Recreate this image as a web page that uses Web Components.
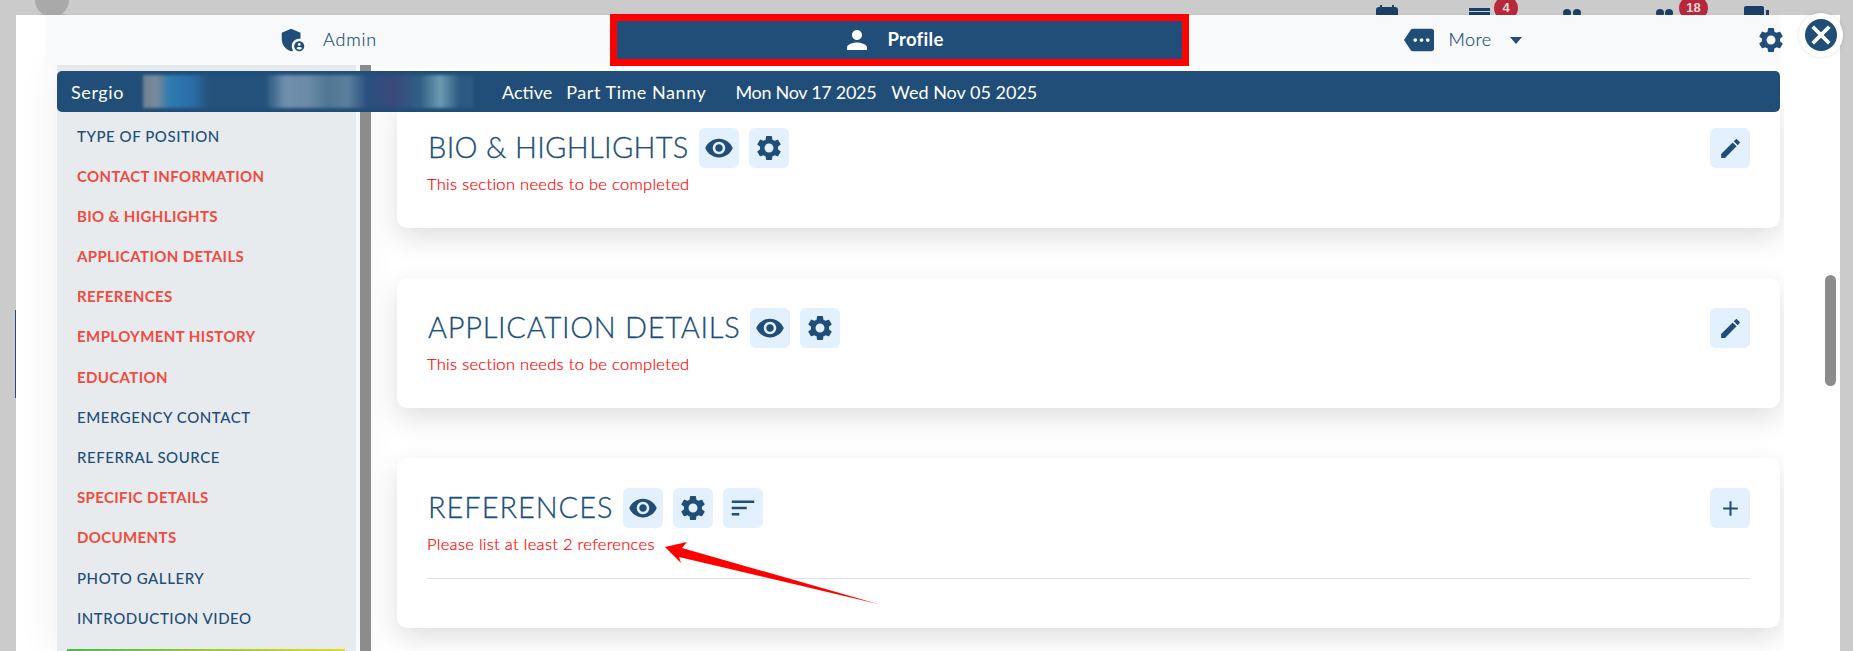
<!DOCTYPE html>
<html>
<head>
<meta charset="utf-8">
<style>
  html, body { margin: 0; height: 100%; overflow: hidden; }
  body { background: #cbcbcb; font-family: "Lato", "Liberation Sans", sans-serif; color: #204e78; }
</style>
</head>
<body>
<back-strip></back-strip>
<modal-window>
  <tab-bar slot="header">
    <tab-item icon="admin" pr="2" ls=".8">Admin</tab-item>
    <tab-item icon="person" pr="13" active>Profile</tab-item>
    <tab-item icon="more" pr="15" caret>More</tab-item>
    <nav-icon name="gear" size="30" style="justify-self:start;margin-left:-3px"></nav-icon>
  </tab-bar>
  <info-bar slot="info"></info-bar>
  <side-nav slot="side">
    <nav-item ls=".55">TYPE OF POSITION</nav-item>
    <nav-item bad ls=".37">CONTACT INFORMATION</nav-item>
    <nav-item bad ls=".37">BIO &amp; HIGHLIGHTS</nav-item>
    <nav-item bad ls=".37">APPLICATION DETAILS</nav-item>
    <nav-item bad ls=".37">REFERENCES</nav-item>
    <nav-item bad ls=".42">EMPLOYMENT HISTORY</nav-item>
    <nav-item bad ls=".37">EDUCATION</nav-item>
    <nav-item ls=".55">EMERGENCY CONTACT</nav-item>
    <nav-item ls=".55">REFERRAL SOURCE</nav-item>
    <nav-item bad ls=".37">SPECIFIC DETAILS</nav-item>
    <nav-item bad ls=".37">DOCUMENTS</nav-item>
    <nav-item ls=".55">PHOTO GALLERY</nav-item>
    <nav-item ls=".55">INTRODUCTION VIDEO</nav-item>
  </side-nav>
  <section-card title="BIO &amp; HIGHLIGHTS" ls=".35" note="This section needs to be completed" action="edit"></section-card>
  <section-card title="APPLICATION DETAILS" ls=".72" note="This section needs to be completed" action="edit"></section-card>
  <section-card title="REFERENCES" ls=".95" note="Please list at least 2 references" action="add" sort divider></section-card>
</modal-window>
<svg style="position:absolute;left:0;top:0;pointer-events:none" width="1853" height="651">
  <polygon fill="#ff0000" points="665,547 687,542 682,548 878,604 679,557 681,563"/>
</svg>

<script>
const ICONS = {
  eye: "M12 4.5C7 4.5 2.73 7.61 1 12c1.73 4.39 6 7.5 11 7.5s9.27-3.11 11-7.5c-1.73-4.39-6-7.5-11-7.5zM12 17c-2.76 0-5-2.24-5-5s2.24-5 5-5 5 2.24 5 5-2.24 5-5 5zm0-8c-1.66 0-3 1.34-3 3s1.34 3 3 3 3-1.34 3-3-1.34-3-3-3z",
  gear: "M19.14,12.94c0.04-0.3,0.06-0.61,0.06-0.94c0-0.32-0.02-0.64-0.07-0.94l2.03-1.58c0.18-0.14,0.23-0.41,0.12-0.61 l-1.92-3.32c-0.12-0.22-0.37-0.29-0.59-0.22l-2.39,0.96c-0.5-0.38-1.03-0.7-1.62-0.94L14.4,2.81c-0.04-0.24-0.24-0.41-0.48-0.41 h-3.84c-0.24,0-0.43,0.17-0.47,0.41L9.25,5.35C8.66,5.59,8.12,5.92,7.63,6.29L5.24,5.33c-0.22-0.08-0.47,0-0.59,0.22L2.74,8.87 C2.62,9.08,2.66,9.34,2.86,9.48l2.03,1.58C4.84,11.36,4.8,11.69,4.8,12s0.02,0.64,0.07,0.94l-2.03,1.58 c-0.18,0.14-0.23,0.41-0.12,0.61l1.92,3.32c0.12,0.22,0.37,0.29,0.59,0.22l2.39-0.96c0.5,0.38,1.03,0.7,1.62,0.94l0.36,2.54 c0.05,0.24,0.24,0.41,0.48,0.41h3.84c0.24,0,0.44-0.17,0.47-0.41l0.36-2.54c0.59-0.24,1.13-0.56,1.62-0.94l2.39,0.96 c0.22,0.08,0.47,0,0.59-0.22l1.92-3.32c0.12-0.22,0.07-0.47-0.12-0.61L19.14,12.94z M12,15.6c-1.98,0-3.6-1.62-3.6-3.6 s1.62-3.6,3.6-3.6s3.6,1.62,3.6,3.6S13.98,15.6,12,15.6z",
  edit: "M3 17.25V21h3.75L17.81 9.94l-3.75-3.75L3 17.25zM20.71 7.04c.39-.39.39-1.02 0-1.41l-2.34-2.34c-.39-.39-1.02-.39-1.41 0l-1.83 1.83 3.75 3.75 1.83-1.83z",
  sort: "M3 18h6v-2H3v2zM3 6v2h18V6H3zm0 7h12v-2H3v2z",
  add: "M19 13h-6v6h-2v-6H5v-2h6V5h2v6h6v2z",
  person: "M12 12c2.21 0 4-1.79 4-4s-1.79-4-4-4-4 1.79-4 4 1.79 4 4 4zm0 2c-2.67 0-8 1.34-8 4v2h16v-2c0-2.66-5.33-4-8-4z",
  close: "M19 6.41L17.59 5 12 10.59 6.41 5 5 6.41 10.59 12 5 17.59 6.41 19 12 13.41 17.59 19 19 17.59 13.41 12z",
  more: "M22 3H7c-.69 0-1.23.35-1.59.88L0 12l5.41 8.11c.36.53.9.89 1.59.89h15c1.1 0 2-.9 2-2V5c0-1.1-.9-2-2-2zM9 13.5c-.83 0-1.5-.67-1.5-1.5s.67-1.5 1.5-1.5 1.5.67 1.5 1.5-.67 1.5-1.5 1.5zm5 0c-.83 0-1.5-.67-1.5-1.5s.67-1.5 1.5-1.5 1.5.67 1.5 1.5-.67 1.5-1.5 1.5zm5 0c-.83 0-1.5-.67-1.5-1.5s.67-1.5 1.5-1.5 1.5.67 1.5 1.5-.67 1.5-1.5 1.5z",
  admin: "M17 11c.34 0 .67.04 1 .09V6.27L10.5 3 3 6.27v4.91c0 4.54 3.2 8.79 7.5 9.82.55-.13 1.08-.32 1.6-.55-.69-.98-1.1-2.17-1.1-3.45 0-3.31 2.69-6 6-6zM17 13c-2.21 0-4 1.79-4 4s1.79 4 4 4 4-1.79 4-4-1.79-4-4-4zm0 1.38c.62 0 1.12.51 1.12 1.12s-.51 1.12-1.12 1.12-1.12-.51-1.12-1.12.5-1.12 1.12-1.12zm0 5.37c-.93 0-1.74-.46-2.24-1.17.05-.72 1.51-1.08 2.24-1.08s2.19.36 2.24 1.08c-.5.71-1.31 1.17-2.24 1.17z"
};

class NavIcon extends HTMLElement {
  connectedCallback() {
    const size = this.getAttribute("size") || 30;
    const color = this.getAttribute("color") || "#204e78";
    const stroke = this.getAttribute("stroke") || 0;
    this.attachShadow({ mode: "open" }).innerHTML = `
      <style>:host{display:inline-flex;width:${size}px;height:${size}px}svg{display:block}</style>
      <svg width="${size}" height="${size}" viewBox="0 0 24 24" fill="${color}" stroke="${color}" stroke-width="${stroke}"><path fill-rule="evenodd" d="${ICONS[this.getAttribute("name")]}"/></svg>`;
  }
}
customElements.define("nav-icon", NavIcon);

class IconButton extends HTMLElement {
  connectedCallback() {
    const name = this.getAttribute("name");
    const size = this.getAttribute("size") || 30;
    this.attachShadow({ mode: "open" }).innerHTML = `
      <style>:host{display:flex;width:40px;height:40px;background:#e3f1fe;border-radius:6px;align-items:center;justify-content:center;flex:none}</style>
      <nav-icon name="${name}" size="${size}"></nav-icon>`;
  }
}
customElements.define("icon-button", IconButton);

// the page behind the dialog, only bits of it show around the modal
class BackStrip extends HTMLElement {
  connectedCallback() {
    this.attachShadow({ mode: "open" }).innerHTML = `
      <style>
        :host{display:block;height:651px;position:relative;overflow:hidden}
        .avatar{position:absolute;left:35px;top:-17px;width:34px;height:34px;background:#a9a9a9;border-radius:50%}
        .shoulder{position:absolute;left:30px;top:14px;width:46px;height:8px;background:#a9a9a9;border-radius:50%}
        .top{position:absolute;top:0;height:15px;background:#1b3f66}
        .badge{position:absolute;top:-4px;height:24px;background:#b7283a;border-radius:12px;color:#e9d4d6;font:700 13px/24px "Liberation Sans",sans-serif;text-align:center}
        .dot{position:absolute;top:9px;width:8px;height:8px;border-radius:50%;background:#1b3f66}
        .edge{position:absolute;left:15px;top:310px;width:1px;height:88px;background:#2a4a6e}
      </style>
      <div class="avatar"></div><div class="shoulder"></div><div class="edge"></div>
      <div class="top" style="left:1376px;width:22px;top:7px;border-radius:3px 3px 0 0"></div>
      <div class="top" style="left:1380px;width:2px;top:5px;height:4px"></div>
      <div class="top" style="left:1392px;width:2px;top:5px;height:4px"></div>
      <div class="top" style="left:1469px;width:21px;top:8px;height:3px"></div>
      <div class="top" style="left:1469px;width:21px;top:12px;height:3px"></div>
      <div class="badge" style="left:1494px;width:24px">4</div>
      <div class="dot" style="left:1563px"></div><div class="dot" style="left:1573px"></div>
      <div class="dot" style="left:1656px"></div><div class="dot" style="left:1665px"></div>
      <div class="badge" style="left:1679px;width:29px">18</div>
      <div class="top" style="left:1744px;width:20px;top:6px;border-radius:2px 2px 0 0"></div>
      <div class="top" style="left:1766px;width:3px;top:10px"></div>`;
  }
}
customElements.define("back-strip", BackStrip);

const modalTemplate = document.createElement("template");
modalTemplate.innerHTML = `
  <style>
    :host{position:absolute;left:16px;top:15px;width:1824px;height:636px;background:#fff;display:block}
    .head{margin-left:30px;width:1734px;height:50px;background:#f8f9fb;box-shadow:0 0 6px rgba(0,0,0,.03);position:relative;z-index:3}
    .body{display:flex;height:586px;position:relative;margin-left:41px;width:1783px}
    .info{position:absolute;left:0;top:6px;z-index:2;width:1723px}
    .side{width:299px;flex:none;box-shadow:0 0 40px rgba(0,0,0,.07)}
    .rail{width:11px;flex:none;margin-left:4px;background:#8c8c8c}
    .main{width:1409px;flex:none;margin-left:4px;overflow:hidden;box-sizing:border-box;padding:33px 4px 0 22px;display:flex;flex-direction:column;gap:50px}
    .thumb{position:absolute;left:1809px;top:260px;width:11px;height:111px;border-radius:6px;background:#8c8c8c}
    .close{position:absolute;left:1783px;top:-2px;width:44px;height:44px;border-radius:50%;background:#fff;display:flex;align-items:center;justify-content:center;box-shadow:0 0 4px rgba(0,0,0,.12);z-index:4}
    .close span{width:32px;height:32px;border-radius:50%;background:#204e78;display:flex;align-items:center;justify-content:center}
  </style>
  <div class="head"><slot name="header"></slot></div>
  <div class="body">
    <div class="info"><slot name="info"></slot></div>
    <div class="side"><slot name="side"></slot></div>
    <div class="rail"></div>
    <div class="main"><slot></slot></div>
  </div>
  <div class="thumb"></div>
  <div class="close"><span><nav-icon name="close" size="30" color="#fff" stroke=".9"></nav-icon></span></div>`;
class ModalWindow extends HTMLElement {
  connectedCallback() {
    this.attachShadow({ mode: "open" }).appendChild(modalTemplate.content.cloneNode(true));
  }
}
customElements.define("modal-window", ModalWindow);

class TabBar extends HTMLElement {
  connectedCallback() {
    this.attachShadow({ mode: "open" }).innerHTML = `
      <style>:host{display:grid;grid-template-columns:repeat(3,565px) 1fr;column-gap:6px;height:50px;align-items:center}</style>
      <slot></slot>`;
  }
}
customElements.define("tab-bar", TabBar);

class TabItem extends HTMLElement {
  connectedCallback() {
    const active = this.hasAttribute("active");
    const caret = this.hasAttribute("caret");
    const pr = this.getAttribute("pr") || 10;
    const ls = this.getAttribute("ls") || .4;
    this.attachShadow({ mode: "open" }).innerHTML = `
      <style>
        :host{display:flex;height:38px;align-items:center;justify-content:center;font-size:18px;letter-spacing:${ls}px;font-weight:300;color:#204e78;gap:15px;padding-right:${pr}px;box-sizing:border-box;-webkit-text-stroke:.2px #204e78}
        :host([active]){background:#204e78;color:#fff;font-weight:700;font-size:18.5px;letter-spacing:.3px;outline:7px solid #ff0000;-webkit-text-stroke:0}
        .label{margin-top:-2px}
        .caret{width:0;height:0;border:6.5px solid transparent;border-top:7px solid #204e78;border-bottom:0;margin-left:4px}
      </style>
      <nav-icon name="${this.getAttribute("icon")}" size="30" color="${active ? "#fff" : "#204e78"}"></nav-icon>
      <span class="label"><slot></slot></span>
      ${caret ? '<span class="caret"></span>' : ""}`;
  }
}
customElements.define("tab-item", TabItem);

class InfoBar extends HTMLElement {
  connectedCallback() {
    this.attachShadow({ mode: "open" }).innerHTML = `
      <style>
        :host{display:flex;height:41px;background:#204e78;border-radius:5px;color:#fff;align-items:center;font-size:18px;font-weight:400;padding-left:14px;box-sizing:border-box}
        .blur{width:330px;height:33px;margin:0 29px 0 19px;flex:none;filter:blur(1.5px);
          background:linear-gradient(90deg,#6d7f92 0,#7a8a9a 4%,#2f7ab0 8%,#2a6da6 15%,#24527c 20%,#24527c 37%,#6f8fae 43%,#6b8aa6 50%,#4f7692 56%,#5b7f9c 62%,#2a4f80 68%,#3a4a7a 76%,#2f5f85 84%,#6c9ab2 90%,#2a5880 96%,#2c5b84 100%)}
        span{white-space:nowrap}
      </style>
      <span style="letter-spacing:.6px">Sergio</span><div class="blur"></div>
      <span>Active</span><span style="margin-left:14px;letter-spacing:.55px">Part Time Nanny</span>
      <span style="margin-left:29px;letter-spacing:-.3px">Mon Nov 17 2025</span><span style="margin-left:15px">Wed Nov 05 2025</span>`;
  }
}
customElements.define("info-bar", InfoBar);

class SideNav extends HTMLElement {
  connectedCallback() {
    this.attachShadow({ mode: "open" }).innerHTML = `
      <style>
        :host{display:block;height:586px;background:#e8ebee;box-sizing:border-box;padding-top:50.5px;position:relative;overflow:hidden}
        .progress{position:absolute;left:10px;right:11px;top:584px;height:2px;background:linear-gradient(90deg,#4fb54a,#e3dc1f)}
      </style>
      <slot></slot><div class="progress"></div>`;
  }
}
customElements.define("side-nav", SideNav);

class NavItem extends HTMLElement {
  connectedCallback() {
    const ls = this.getAttribute("ls") || 0;
    this.attachShadow({ mode: "open" }).innerHTML = `
      <style>
        :host{display:block;height:40.2px;line-height:40.2px;padding-left:20px;font-size:15px;font-weight:500;letter-spacing:${ls}px;color:#204e78;white-space:nowrap}
        :host([bad]){color:#ef4b3f;font-weight:700}
      </style><slot></slot>`;
  }
}
customElements.define("nav-item", NavItem);

class SectionCard extends HTMLElement {
  connectedCallback() {
    const action = this.getAttribute("action");
    const divider = this.hasAttribute("divider");
    this.attachShadow({ mode: "open" }).innerHTML = `
      <style>
        :host{display:block;flex:none;background:#fff;border-radius:10px;box-shadow:0 10px 28px rgba(0,0,0,.13);padding:30px 30px ${divider ? 49 : 33}px;box-sizing:border-box}
        .row{display:flex;align-items:center;gap:10px;height:40px}
        h2{margin:-4px 0 0 1px;font-size:29px;font-weight:300;letter-spacing:${this.getAttribute("ls")}px;color:#204e78;white-space:nowrap;-webkit-text-stroke:.3px #204e78}
        .spacer{flex:1}
        .note{font-size:16.5px;font-weight:300;letter-spacing:.3px;color:#ff0000;line-height:22px;margin-top:5px;-webkit-text-stroke:.2px #ff0000}
        hr{border:0;border-top:1px solid #e2e2e2;margin:23px 0 0}
      </style>
      <div class="row">
        <h2>${this.getAttribute("title").replace("&", "&amp;")}</h2>
        <icon-button name="eye"></icon-button>
        <icon-button name="gear"></icon-button>
        ${this.hasAttribute("sort") ? '<icon-button name="sort"></icon-button>' : ""}
        <div class="spacer"></div>
        <icon-button name="${action}" size="25"></icon-button>
      </div>
      <div class="note">${this.getAttribute("note")}</div>
      ${divider ? "<hr>" : ""}`;
  }
}
customElements.define("section-card", SectionCard);
</script>
</body>
</html>
